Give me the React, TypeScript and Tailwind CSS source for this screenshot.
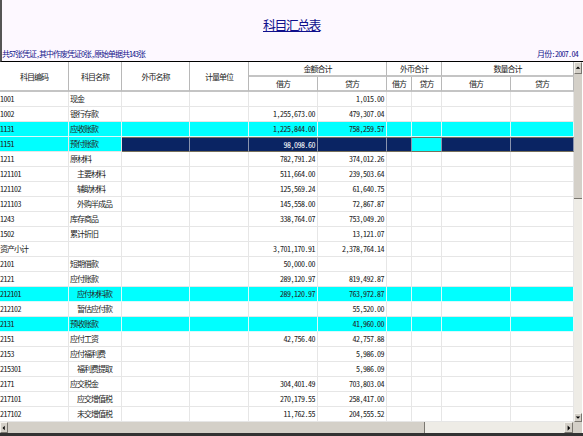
import React from "react";

type Row = { code: string; name: string; debit?: string; credit?: string; sub?: boolean; kind?: "cyan" | "sel" };

const rows: Row[] = [
  { code: "1001", name: "现金", credit: "1,015.00" },
  { code: "1002", name: "银行存款", debit: "1,255,673.00", credit: "479,307.04" },
  { code: "1131", name: "应收账款", debit: "1,225,844.00", credit: "758,259.57", kind: "cyan" },
  { code: "1151", name: "预付账款", debit: "98,098.60", kind: "sel" },
  { code: "1211", name: "原材料", debit: "782,791.24", credit: "374,012.26" },
  { code: "121101", name: "主要材料", sub: true, debit: "511,664.00", credit: "239,503.64" },
  { code: "121102", name: "辅助材料", sub: true, debit: "125,569.24", credit: "61,640.75" },
  { code: "121103", name: "外购半成品", sub: true, debit: "145,558.00", credit: "72,867.87" },
  { code: "1243", name: "库存商品", debit: "338,764.07", credit: "753,049.20" },
  { code: "1502", name: "累计折旧", credit: "13,121.07" },
  { code: "资产小计", name: "", debit: "3,701,170.91", credit: "2,378,764.14" },
  { code: "2101", name: "短期借款", debit: "50,000.00" },
  { code: "2121", name: "应付账款", debit: "289,120.97", credit: "819,492.87" },
  { code: "212101", name: "应付材料款", sub: true, debit: "289,120.97", credit: "763,972.87", kind: "cyan" },
  { code: "212102", name: "暂估应付款", sub: true, credit: "55,520.00" },
  { code: "2131", name: "预收账款", credit: "41,960.00", kind: "cyan" },
  { code: "2151", name: "应付工资", debit: "42,756.40", credit: "42,757.88" },
  { code: "2153", name: "应付福利费", credit: "5,986.09" },
  { code: "215301", name: "福利费提取", sub: true, credit: "5,986.09" },
  { code: "2171", name: "应交税金", debit: "304,401.49", credit: "703,803.04" },
  { code: "217101", name: "应交增值税", sub: true, debit: "270,179.55", credit: "258,417.00" },
  { code: "217102", name: "未交增值税", sub: true, debit: "11,762.55", credit: "204,555.52" },
];

const family = "font-['Noto_Sans_CJK_SC','Noto_Sans_CJK_JP',sans-serif] [font-feature-settings:'hwid'] text-[8px]";
const cjk = `${family} tracking-[-1px] leading-[14px]`;
const num = `${family} tracking-[-0.5px] leading-[14px]`;
const numSel = `${family} tracking-[-0.5px] leading-[13px]`;
const headCell = `border-r border-r-[#b8b8b8] border-b-2 border-b-[#c4c4c4] p-0 text-center font-normal text-[#222] ${family} tracking-[-1px] leading-[13px]`;

function Arrow({ dir }: { dir: "up" | "down" | "left" | "right" }) {
  const points = { up: "4,2 1,5 7,5", down: "1,2 7,2 4,5", left: "5,1 5,7 2,4", right: "3,1 3,7 6,4" }[dir];
  return (
    <svg width="8" height="8" viewBox="0 0 8 8">
      <polygon points={points} fill="#000" />
    </svg>
  );
}

function ScrollButton({ dir, className }: { dir: "up" | "down" | "left" | "right"; className: string }) {
  return (
    <div className={`flex shrink-0 items-center justify-center bg-[#d4d0c8] border border-t-[#f4f2ec] border-l-[#f4f2ec] border-r-[#7a7770] border-b-[#7a7770] ${className}`}>
      <Arrow dir={dir} />
    </div>
  );
}

function DataRow({ row }: { row: Row }) {
  const sel = row.kind === "sel";
  const bg = row.kind === "cyan" || sel ? "bg-[#00ffff]" : "bg-white";
  const line = row.kind === "cyan" ? "border-[#d8fbfb]" : "border-[#e6e6e6]";
  const base = `h-[15px] p-0 border-r border-b overflow-hidden whitespace-nowrap ${line}`;
  const selCell = "bg-[#0a2463] border-y border-y-[#77705a] border-r-[#8a93ad] text-white";
  const rest = sel ? `h-[15px] p-0 overflow-hidden whitespace-nowrap border-r ${selCell}` : `${base} ${bg}`;
  const amount = sel ? numSel : `${num} text-[#222]`;
  return (
    <tr>
      <td className={`${base} ${bg} text-[#222] ${row.code === "资产小计" ? cjk : num}`}>{row.code}</td>
      <td className={`${base} ${bg} text-[#222] ${cjk} ${row.sub ? "pl-[8px]" : "pl-[1px]"}`}>{row.name}</td>
      <td className={rest} />
      <td className={rest} />
      <td className={`${rest} ${amount} pr-[2px] text-right`}>{row.debit}</td>
      <td className={`${rest} ${amount} pr-[2px] text-right`}>{row.credit}</td>
      <td className={rest} />
      <td className={sel ? `h-[15px] p-0 border-r border-y border-y-[#77705a] border-r-[#8a93ad] bg-[#00ffff]` : rest} />
      <td className={rest} />
      <td className={rest} />
    </tr>
  );
}

export default function App() {
  return (
    <div className="flex h-[436px] w-[583px] flex-col overflow-hidden bg-white">
      <header className="flex h-[62px] shrink-0 flex-col border-b border-b-black border-l-2 border-l-[#555] bg-[#fdf8ff] text-[#14148c]">
        <h1 className="mt-[16px] h-[20px] pr-[2px] text-center font-['Noto_Sans_CJK_SC',sans-serif] text-[13px] font-normal leading-[18px] tracking-[-1.6px] text-[#10108c] underline">
          科目汇总表
        </h1>
        <div className="mt-[11px] flex items-center justify-between pr-[5px] leading-[12px]">
          <span className={cjk}>共57张凭证,其中作废凭证0张,原始单据共143张</span>
          <span className={`${family} tracking-[-0.7px] leading-[14px]`}>月份:2007.04</span>
        </div>
      </header>
      <div className="flex min-h-0 flex-1">
        <div className="w-[574px] shrink-0 overflow-hidden">
          <table className="w-[574px] table-fixed border-separate border-spacing-0">
            <colgroup>
              <col className="w-[69px]" />
              <col className="w-[53px]" />
              <col className="w-[68px]" />
              <col className="w-[59px]" />
              <col className="w-[69px]" />
              <col className="w-[69px]" />
              <col className="w-[25px]" />
              <col className="w-[30px]" />
              <col className="w-[69px]" />
              <col className="w-[63px]" />
            </colgroup>
            <thead>
              <tr>
                {["科目编码", "科目名称", "外币名称", "计量单位"].map((t) => (
                  <th key={t} rowSpan={2} className={headCell}>{t}</th>
                ))}
                <th colSpan={2} className={`${headCell} h-[15px]`}>金额合计</th>
                <th colSpan={2} className={`${headCell} h-[15px]`}>外币合计</th>
                <th colSpan={2} className={`${headCell} h-[15px]`}>数量合计</th>
              </tr>
              <tr>
                {["借方", "贷方", "借方", "贷方", "借方", "贷方"].map((t, i) => (
                  <th key={i} className={`${headCell} h-[15px]`}>{t}</th>
                ))}
              </tr>
            </thead>
            <tbody>
              {rows.map((r) => (
                <DataRow key={r.code} row={r} />
              ))}
            </tbody>
          </table>
        </div>
        <div className="flex w-[8px] shrink-0 flex-col bg-[#eeece6]">
          <ScrollButton dir="up" className="h-[12px] w-[8px]" />
          <div className="h-[125px] shrink-0 bg-[#d4d0c8] border-b border-b-[#7a7770]" />
          <div className="flex-1" />
          <ScrollButton dir="down" className="h-[9px] w-[8px]" />
        </div>
      </div>
      <div className="flex h-[11px] w-[582px] shrink-0 bg-[#eeece6]">
        <ScrollButton dir="left" className="h-[11px] w-[8px]" />
        <div className="w-[417px] shrink-0 bg-[#d4d0c8] border-r border-r-[#7a7770]" />
        <div className="flex-1" />
        <ScrollButton dir="right" className="h-[11px] w-[9px]" />
        <div className="w-[9px] shrink-0 bg-[#d4d0c8]" />
      </div>
      <div className="h-[3px] shrink-0 bg-[#333]" />
    </div>
  );
}
